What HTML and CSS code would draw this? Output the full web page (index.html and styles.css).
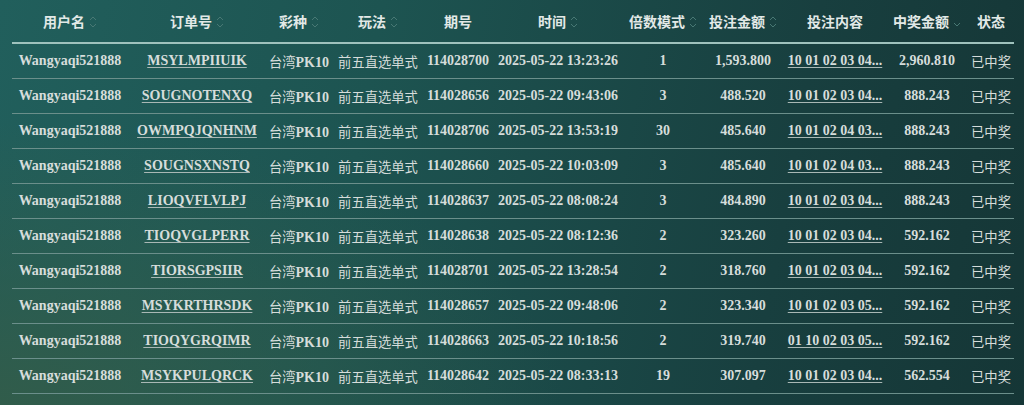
FILE: index.html
```html
<!DOCTYPE html>
<html lang="zh-CN">
<head>
  <meta charset="UTF-8" />
  <title>投注记录</title>
  <link rel="stylesheet" href="styles.css">
</head>
<body>

<table class="records">
  <colgroup>
    <col style="width:116px"><col style="width:138px"><col style="width:66px"><col style="width:92px">
    <col style="width:68px"><col style="width:132px"><col style="width:78px"><col style="width:82px">
    <col style="width:102px"><col style="width:82px"><col style="width:46px">
  </colgroup>
  <thead>
    <tr>
      <th>用户名<span class="sort"><svg viewBox="0 0 8 14"><path d="M1 5 L4 2 L7 5 M1 9 L4 12 L7 9"/></svg></span></th>
      <th>订单号<span class="sort"><svg viewBox="0 0 8 14"><path d="M1 5 L4 2 L7 5 M1 9 L4 12 L7 9"/></svg></span></th>
      <th>彩种<span class="sort"><svg viewBox="0 0 8 14"><path d="M1 5 L4 2 L7 5 M1 9 L4 12 L7 9"/></svg></span></th>
      <th>玩法<span class="sort"><svg viewBox="0 0 8 14"><path d="M1 5 L4 2 L7 5 M1 9 L4 12 L7 9"/></svg></span></th>
      <th>期号</th>
      <th>时间<span class="sort"><svg viewBox="0 0 8 14"><path d="M1 5 L4 2 L7 5 M1 9 L4 12 L7 9"/></svg></span></th>
      <th>倍数模式<span class="sort"><svg viewBox="0 0 8 14"><path d="M1 5 L4 2 L7 5 M1 9 L4 12 L7 9"/></svg></span></th>
      <th>投注金额<span class="sort"><svg viewBox="0 0 8 14"><path d="M1 5 L4 2 L7 5 M1 9 L4 12 L7 9"/></svg></span></th>
      <th>投注内容</th>
      <th>中奖金额<span class="sort"><svg viewBox="0 0 8 14"><path d="M1 8 L4 11 L7 8"/></svg></span></th>
      <th>状态</th>
    </tr>
  </thead>
  <tbody>
    <tr><td>Wangyaqi521888</td><td><a>MSYLMPIIUIK</a></td><td><span class="cn">台湾</span>PK10</td><td class="cn">前五直选单式</td><td>114028700</td><td>2025-05-22 13:23:26</td><td>1</td><td>1,593.800</td><td><a>10 01 02 03 04...</a></td><td>2,960.810</td><td class="cn">已中奖</td></tr>
    <tr><td>Wangyaqi521888</td><td><a>SOUGNOTENXQ</a></td><td><span class="cn">台湾</span>PK10</td><td class="cn">前五直选单式</td><td>114028656</td><td>2025-05-22 09:43:06</td><td>3</td><td>488.520</td><td><a>10 01 02 03 04...</a></td><td>888.243</td><td class="cn">已中奖</td></tr>
    <tr><td>Wangyaqi521888</td><td><a>OWMPQJQNHNM</a></td><td><span class="cn">台湾</span>PK10</td><td class="cn">前五直选单式</td><td>114028706</td><td>2025-05-22 13:53:19</td><td>30</td><td>485.640</td><td><a>10 01 02 04 03...</a></td><td>888.243</td><td class="cn">已中奖</td></tr>
    <tr><td>Wangyaqi521888</td><td><a>SOUGNSXNSTQ</a></td><td><span class="cn">台湾</span>PK10</td><td class="cn">前五直选单式</td><td>114028660</td><td>2025-05-22 10:03:09</td><td>3</td><td>485.640</td><td><a>10 01 02 04 03...</a></td><td>888.243</td><td class="cn">已中奖</td></tr>
    <tr><td>Wangyaqi521888</td><td><a>LIOQVFLVLPJ</a></td><td><span class="cn">台湾</span>PK10</td><td class="cn">前五直选单式</td><td>114028637</td><td>2025-05-22 08:08:24</td><td>3</td><td>484.890</td><td><a>10 01 02 03 04...</a></td><td>888.243</td><td class="cn">已中奖</td></tr>
    <tr><td>Wangyaqi521888</td><td><a>TIOQVGLPERR</a></td><td><span class="cn">台湾</span>PK10</td><td class="cn">前五直选单式</td><td>114028638</td><td>2025-05-22 08:12:36</td><td>2</td><td>323.260</td><td><a>10 01 02 03 04...</a></td><td>592.162</td><td class="cn">已中奖</td></tr>
    <tr><td>Wangyaqi521888</td><td><a>TIORSGPSIIR</a></td><td><span class="cn">台湾</span>PK10</td><td class="cn">前五直选单式</td><td>114028701</td><td>2025-05-22 13:28:54</td><td>2</td><td>318.760</td><td><a>10 01 02 03 04...</a></td><td>592.162</td><td class="cn">已中奖</td></tr>
    <tr><td>Wangyaqi521888</td><td><a>MSYKRTHRSDK</a></td><td><span class="cn">台湾</span>PK10</td><td class="cn">前五直选单式</td><td>114028657</td><td>2025-05-22 09:48:06</td><td>2</td><td>323.340</td><td><a>10 01 02 03 05...</a></td><td>592.162</td><td class="cn">已中奖</td></tr>
    <tr><td>Wangyaqi521888</td><td><a>TIOQYGRQIMR</a></td><td><span class="cn">台湾</span>PK10</td><td class="cn">前五直选单式</td><td>114028663</td><td>2025-05-22 10:18:56</td><td>2</td><td>319.740</td><td><a>01 10 02 03 05...</a></td><td>592.162</td><td class="cn">已中奖</td></tr>
    <tr><td>Wangyaqi521888</td><td><a>MSYKPULQRCK</a></td><td><span class="cn">台湾</span>PK10</td><td class="cn">前五直选单式</td><td>114028642</td><td>2025-05-22 08:33:13</td><td>19</td><td>307.097</td><td><a>10 01 02 03 04...</a></td><td>562.554</td><td class="cn">已中奖</td></tr>
  </tbody>
</table>

</body>
</html>
```

FILE: styles.css
```css
html, body {
  height: 100%;
}

body {
  margin: 0;
  padding: 0 10px 0 12px;
  font-family: 'Liberation Serif', 'Noto Sans CJK SC', serif;
  color: #d6dddb;
  background:
    radial-gradient(ellipse 55% 70% at 0% 100%, rgba(52, 92, 72, 0.85), rgba(52, 92, 72, 0) 100%),
    linear-gradient(100deg, #215f5c 0%, #1d5451 35%, #183f3f 75%, #153636 100%);
  overflow: hidden;
}

.records {
  width: 1002px;
  table-layout: fixed;
  border-collapse: collapse;
  font-size: 14px;
}

.records th {
  height: 42px;
  padding: 0;
  font-family: 'Noto Sans CJK SC', sans-serif;
  font-weight: bold;
  font-size: 14px;
  color: #e2e9e7;
  white-space: nowrap;
  border-bottom: 2px solid #9fc2bd;
}

.sort {
  display: inline-block;
  vertical-align: middle;
  margin-left: 4px;
  margin-top: -3px;
}

.sort svg {
  display: block;
  width: 8px;
  height: 14px;
  fill: none;
  stroke: #487874;
  stroke-width: 1;
}

.records td {
  height: 34px;
  padding: 0;
  text-align: center;
  font-weight: bold;
  white-space: nowrap;
  border-bottom: 1px solid #6b8f8b;
}

.records td.cn,
.records .cn {
  font-family: 'Noto Sans CJK SC', sans-serif;
  font-weight: normal;
  font-size: 13.3px;
}

.records a {
  color: #d6dddb;
  text-decoration: underline;
  text-decoration-color: #a9b8b5;
  text-underline-offset: 2px;
}
```
